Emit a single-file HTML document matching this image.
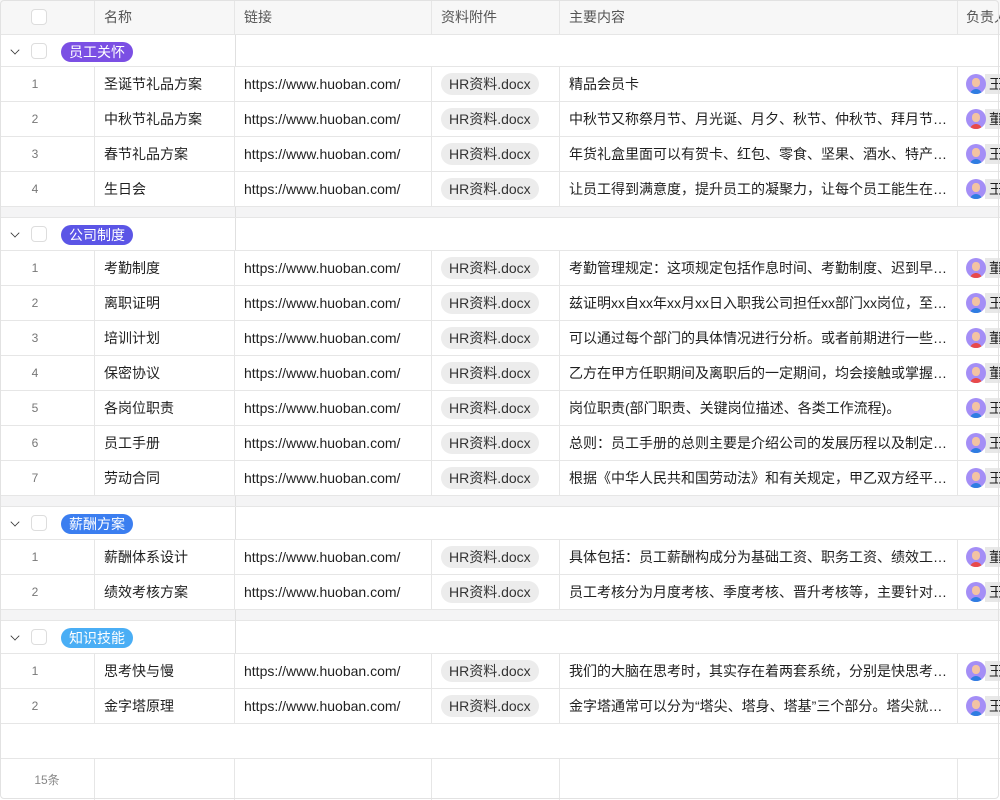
<!DOCTYPE html><html><head><meta charset="utf-8"><style>
*{box-sizing:border-box;margin:0;padding:0}
body{width:1000px;height:800px;overflow:hidden;background:#fff;font-family:"Liberation Sans","Noto Sans CJK SC",sans-serif;color:#1f1f1f;position:relative}
.frame{position:absolute;left:0;top:0;width:1000px;height:800px;overflow:hidden}
.bd{position:absolute;left:0;top:0;width:999px;height:799px;border:1px solid #e2e2e2;border-radius:4px;pointer-events:none;z-index:5}
.r{position:absolute;left:0;width:1000px;border-bottom:1px solid #e6e6e6}
.c{position:absolute;top:0;height:100%;border-right:1px solid #e6e6e6;display:flex;align-items:center;font-size:14px;white-space:nowrap;overflow:hidden}
.c0{left:0;width:95px;justify-content:center;padding-right:24px;font-size:12px;color:#777}
.c1{left:95px;width:140px;padding-left:9px}
.c2{left:235px;width:197px;padding-left:9px}
.c3{left:432px;width:128px;padding-left:9px}
.c4{left:560px;width:398px;padding-left:9px}
.c5{left:958px;width:42px;padding-left:8px;border-right:none}
.hd{background:#f7f7f7;top:0;height:35px}
.hd .c{color:#555}
.chip{background:#ececec;border-radius:11px;height:22px;line-height:22px;padding:0 8px;font-size:14px;color:#333}
.txt{overflow:hidden;text-overflow:ellipsis;width:386px;display:block}
.cb{width:16px;height:16px;border:1px solid #ddd;border-radius:4px;background:#fff;position:absolute}
.g{height:33px}
.tag{position:absolute;left:61px;top:7px;height:20px;line-height:20px;border-radius:10px;color:#fff;font-size:14px;padding:0 8px}
.arr{position:absolute;left:11px;top:11px;width:8px;height:8px;border-right:1.6px solid #333;border-bottom:1.6px solid #333;transform:rotate(45deg) scale(.8);}
.gap{height:11px;background:#f4f4f5}
.gap .l{position:absolute;left:235px;top:0;height:100%;border-right:1px solid #e0e0e0}
.vl{position:absolute;left:235px;top:0;height:100%;border-left:1px solid #e0e0e0}
.av{width:20px;height:20px;border-radius:50%;background:#a48ef6;position:relative;flex:none;overflow:hidden}
.av::before{content:"";position:absolute;left:6px;top:4px;width:8px;height:9px;border-radius:45%;background:#f3c3a3}
.av::after{content:"";position:absolute;left:4px;top:15px;width:12px;height:8px;border-radius:6px 6px 0 0;background:#2f7de1}
.av.f::after{background:#e84a4a}
.nm{background:#e8e8e8;height:20px;line-height:20px;padding-left:4px;font-size:14px;margin-left:-1px;width:30px}
</style></head><body><div class="frame"><div class="bd"></div>
<div class="r hd" style="height:35px"><div class="c c0"><span class="cb" style="left:31px;top:9px"></span></div><div class="c c1">名称</div><div class="c c2">链接</div><div class="c c3">资料附件</div><div class="c c4">主要内容</div><div class="c c5">负责人</div></div>

<div class="r g" style="top:35px;height:32px"><div class="vl"></div><span class="arr"></span><span class="cb" style="left:31px;top:8px"></span><span class="tag" style="background:#7b4fe4">员工关怀</span></div>
<div class="r" style="top:67px;height:35px"><div class="c c0">1</div><div class="c c1">圣诞节礼品方案</div><div class="c c2">https://www.huoban.com/</div><div class="c c3"><span class="chip">HR资料.docx</span></div><div class="c c4"><span class="txt">精品会员卡</span></div><div class="c c5"><span class="av"></span><span class="nm">王</span></div></div>
<div class="r" style="top:102px;height:35px"><div class="c c0">2</div><div class="c c1">中秋节礼品方案</div><div class="c c2">https://www.huoban.com/</div><div class="c c3"><span class="chip">HR资料.docx</span></div><div class="c c4"><span class="txt">中秋节又称祭月节、月光诞、月夕、秋节、仲秋节、拜月节、团圆节</span></div><div class="c c5"><span class="av f"></span><span class="nm">董</span></div></div>
<div class="r" style="top:137px;height:35px"><div class="c c0">3</div><div class="c c1">春节礼品方案</div><div class="c c2">https://www.huoban.com/</div><div class="c c3"><span class="chip">HR资料.docx</span></div><div class="c c4"><span class="txt">年货礼盒里面可以有贺卡、红包、零食、坚果、酒水、特产等等</span></div><div class="c c5"><span class="av"></span><span class="nm">王</span></div></div>
<div class="r" style="top:172px;height:35px"><div class="c c0">4</div><div class="c c1">生日会</div><div class="c c2">https://www.huoban.com/</div><div class="c c3"><span class="chip">HR资料.docx</span></div><div class="c c4"><span class="txt">让员工得到满意度，提升员工的凝聚力，让每个员工能生在公司</span></div><div class="c c5"><span class="av"></span><span class="nm">王</span></div></div>
<div class="r gap" style="top:207px"><div class="l"></div></div>

<div class="r g" style="top:218px"><div class="vl"></div><span class="arr"></span><span class="cb" style="left:31px;top:8px"></span><span class="tag" style="background:#5b55e6">公司制度</span></div>
<div class="r" style="top:251px;height:35px"><div class="c c0">1</div><div class="c c1">考勤制度</div><div class="c c2">https://www.huoban.com/</div><div class="c c3"><span class="chip">HR资料.docx</span></div><div class="c c4"><span class="txt">考勤管理规定：这项规定包括作息时间、考勤制度、迟到早退规定</span></div><div class="c c5"><span class="av f"></span><span class="nm">董</span></div></div>
<div class="r" style="top:286px;height:35px"><div class="c c0">2</div><div class="c c1">离职证明</div><div class="c c2">https://www.huoban.com/</div><div class="c c3"><span class="chip">HR资料.docx</span></div><div class="c c4"><span class="txt">兹证明xx自xx年xx月xx日入职我公司担任xx部门xx岗位，至今日</span></div><div class="c c5"><span class="av"></span><span class="nm">王</span></div></div>
<div class="r" style="top:321px;height:35px"><div class="c c0">3</div><div class="c c1">培训计划</div><div class="c c2">https://www.huoban.com/</div><div class="c c3"><span class="chip">HR资料.docx</span></div><div class="c c4"><span class="txt">可以通过每个部门的具体情况进行分析。或者前期进行一些调研工作</span></div><div class="c c5"><span class="av f"></span><span class="nm">董</span></div></div>
<div class="r" style="top:356px;height:35px"><div class="c c0">4</div><div class="c c1">保密协议</div><div class="c c2">https://www.huoban.com/</div><div class="c c3"><span class="chip">HR资料.docx</span></div><div class="c c4"><span class="txt">乙方在甲方任职期间及离职后的一定期间，均会接触或掌握甲方的</span></div><div class="c c5"><span class="av f"></span><span class="nm">董</span></div></div>
<div class="r" style="top:391px;height:35px"><div class="c c0">5</div><div class="c c1">各岗位职责</div><div class="c c2">https://www.huoban.com/</div><div class="c c3"><span class="chip">HR资料.docx</span></div><div class="c c4"><span class="txt">岗位职责(部门职责、关键岗位描述、各类工作流程)。</span></div><div class="c c5"><span class="av"></span><span class="nm">王</span></div></div>
<div class="r" style="top:426px;height:35px"><div class="c c0">6</div><div class="c c1">员工手册</div><div class="c c2">https://www.huoban.com/</div><div class="c c3"><span class="chip">HR资料.docx</span></div><div class="c c4"><span class="txt">总则：员工手册的总则主要是介绍公司的发展历程以及制定手册的</span></div><div class="c c5"><span class="av"></span><span class="nm">王</span></div></div>
<div class="r" style="top:461px;height:35px"><div class="c c0">7</div><div class="c c1">劳动合同</div><div class="c c2">https://www.huoban.com/</div><div class="c c3"><span class="chip">HR资料.docx</span></div><div class="c c4"><span class="txt">根据《中华人民共和国劳动法》和有关规定，甲乙双方经平等协商</span></div><div class="c c5"><span class="av"></span><span class="nm">王</span></div></div>
<div class="r gap" style="top:496px"><div class="l"></div></div>

<div class="r g" style="top:507px"><div class="vl"></div><span class="arr"></span><span class="cb" style="left:31px;top:8px"></span><span class="tag" style="background:#3b7ef0">薪酬方案</span></div>
<div class="r" style="top:540px;height:35px"><div class="c c0">1</div><div class="c c1">薪酬体系设计</div><div class="c c2">https://www.huoban.com/</div><div class="c c3"><span class="chip">HR资料.docx</span></div><div class="c c4"><span class="txt">具体包括：员工薪酬构成分为基础工资、职务工资、绩效工资等等</span></div><div class="c c5"><span class="av f"></span><span class="nm">董</span></div></div>
<div class="r" style="top:575px;height:35px"><div class="c c0">2</div><div class="c c1">绩效考核方案</div><div class="c c2">https://www.huoban.com/</div><div class="c c3"><span class="chip">HR资料.docx</span></div><div class="c c4"><span class="txt">员工考核分为月度考核、季度考核、晋升考核等，主要针对员工的</span></div><div class="c c5"><span class="av"></span><span class="nm">王</span></div></div>
<div class="r gap" style="top:610px"><div class="l"></div></div>

<div class="r g" style="top:621px"><div class="vl"></div><span class="arr"></span><span class="cb" style="left:31px;top:8px"></span><span class="tag" style="background:#4aaef5">知识技能</span></div>
<div class="r" style="top:654px;height:35px"><div class="c c0">1</div><div class="c c1">思考快与慢</div><div class="c c2">https://www.huoban.com/</div><div class="c c3"><span class="chip">HR资料.docx</span></div><div class="c c4"><span class="txt">我们的大脑在思考时，其实存在着两套系统，分别是快思考和慢思考</span></div><div class="c c5"><span class="av"></span><span class="nm">王</span></div></div>
<div class="r" style="top:689px;height:35px"><div class="c c0">2</div><div class="c c1">金字塔原理</div><div class="c c2">https://www.huoban.com/</div><div class="c c3"><span class="chip">HR资料.docx</span></div><div class="c c4"><span class="txt">金字塔通常可以分为“塔尖、塔身、塔基”三个部分。塔尖就是结论</span></div><div class="c c5"><span class="av"></span><span class="nm">王</span></div></div>
<div class="r" style="top:724px;height:35px"></div>
<div class="r" style="top:759px;height:41px;border-bottom:none"><div class="c c0" style="color:#888;padding-right:0">15条</div><div class="c c1"></div><div class="c c2"></div><div class="c c3"></div><div class="c c4"></div><div class="c c5"></div></div>
</div></body></html>
